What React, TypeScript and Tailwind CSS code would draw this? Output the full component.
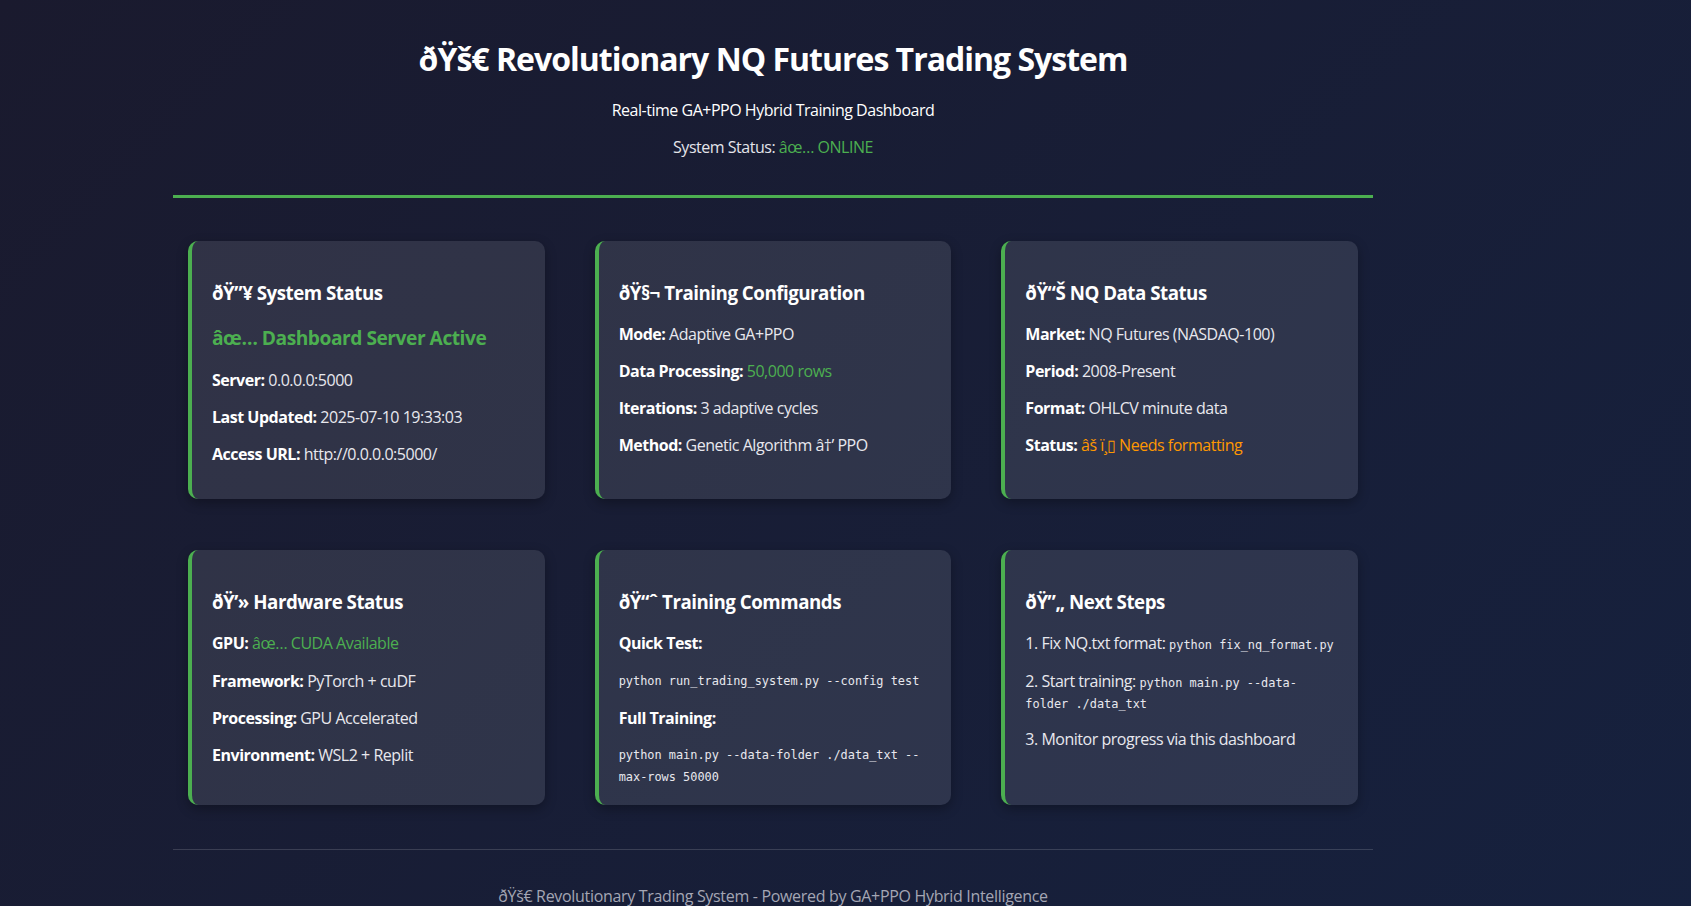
const sans = "font-['Open_Sans','Noto_Sans',sans-serif] tracking-[-0.03em]";
const mono = "font-['DejaVu_Sans_Mono','Liberation_Mono',monospace] text-[11.9px] tracking-normal";

const Row = ({ label, children }: { label: string; children: React.ReactNode }) => (
  <p className="leading-[21.3px] mt-[16px] first:mt-0">
    <strong className="font-bold text-white">{label}</strong> {children}
  </p>
);

const Card = ({ title, children }: { title: string; children: React.ReactNode }) => (
  <div className="bg-white/10 rounded-[10px] border-l-4 border-[#4CAF50] pt-[39px] px-[20px] pb-[17px] shadow-[0_4px_12px_rgba(0,0,0,0.3)]">
    <h3 className="text-[18.72px] leading-[25px] font-bold text-white">{title}</h3>
    <div className="mt-[19px] text-[16px] text-[#e8e8ee]">{children}</div>
  </div>
);

export default function App() {
  return (
    <div className={`min-h-screen bg-[linear-gradient(135deg,#1a1a2e_0%,#16213e_100%)] text-white ${sans}`}>
      <div className="ml-[173px] w-[1200px]">
        <header className="pt-[38px] pb-[36px] border-b-[3px] border-[#4CAF50] text-center">
          <h1 className="text-[32px] leading-[42px] font-bold tracking-[-1px]">ðŸš€ Revolutionary NQ Futures Trading System</h1>
          <p className="mt-[20px] text-[16px] leading-[21.3px]">Real-time GA+PPO Hybrid Training Dashboard</p>
          <p className="mt-[16px] text-[16px] leading-[21.3px] text-[#e4e4ea]">
            System Status: <span className="text-[#4CAF50]">âœ… ONLINE</span>
          </p>
        </header>

        <div className="mt-[43px] px-[15px] grid grid-cols-3 gap-x-[50px] gap-y-[51px]">
          <Card title="ðŸ”¥ System Status">
            <p className="text-[19.2px] leading-[27px] font-bold text-[#4CAF50] mb-[19px]">âœ… Dashboard Server Active</p>
            <Row label="Server:">0.0.0.0:5000</Row>
            <Row label="Last Updated:">2025-07-10 19:33:03</Row>
            <Row label="Access URL:">http://0.0.0.0:5000/</Row>
            <div className="h-[17px]" />
          </Card>

          <Card title="ðŸ§¬ Training Configuration">
            <Row label="Mode:">Adaptive GA+PPO</Row>
            <Row label="Data Processing:">
              <span className="text-[#4CAF50]">50,000 rows</span>
            </Row>
            <Row label="Iterations:">3 adaptive cycles</Row>
            <Row label="Method:">Genetic Algorithm â†’ PPO</Row>
          </Card>

          <Card title="ðŸ“Š NQ Data Status">
            <Row label="Market:">NQ Futures (NASDAQ-100)</Row>
            <Row label="Period:">2008-Present</Row>
            <Row label="Format:">OHLCV minute data</Row>
            <Row label="Status:">
              <span className="text-[#FF9800]">âš ï¸▯ Needs formatting</span>
            </Row>
          </Card>

          <Card title="ðŸ’» Hardware Status">
            <Row label="GPU:">
              <span className="text-[#4CAF50]">âœ… CUDA Available</span>
            </Row>
            <Row label="Framework:">PyTorch + cuDF</Row>
            <Row label="Processing:">GPU Accelerated</Row>
            <Row label="Environment:">WSL2 + Replit</Row>
          </Card>

          <Card title="ðŸ“ˆ Training Commands">
            <p className="leading-[21.3px] font-bold text-white">Quick Test:</p>
            <div className={`mt-[16px] leading-[21.3px] ${mono}`}>python run_trading_system.py --config test</div>
            <p className="mt-[16px] leading-[21.3px] font-bold text-white">Full Training:</p>
            <div className={`mt-[16px] leading-[21.3px] ${mono}`}>
              python main.py --data-folder ./data_txt --
              <br />
              max-rows 50000
            </div>
          </Card>

          <Card title="ðŸ”„ Next Steps">
            <p className="leading-[21.3px] whitespace-nowrap">
              1. Fix NQ.txt format: <code className={`${mono} leading-[12px]`}>python fix_nq_format.py</code>
            </p>
            <p className="mt-[16px] leading-[21.3px]">
              2. Start training:{" "}
              <code className={`${mono} leading-[12px]`}>
                python main.py --data-
                <br />
                folder ./data_txt
              </code>
            </p>
            <p className="mt-[16px] leading-[21.3px]">3. Monitor progress via this dashboard</p>
          </Card>
        </div>

        <footer className="mt-[44px] border-t border-white/15 pt-[36px] pb-[20px] text-center">
          <p className="text-[16px] leading-[21.3px] text-[#a4a6b4] tracking-[-0.02em]">
            ðŸš€ Revolutionary Trading System - Powered by GA+PPO Hybrid Intelligence
          </p>
        </footer>
      </div>
    </div>
  );
}
